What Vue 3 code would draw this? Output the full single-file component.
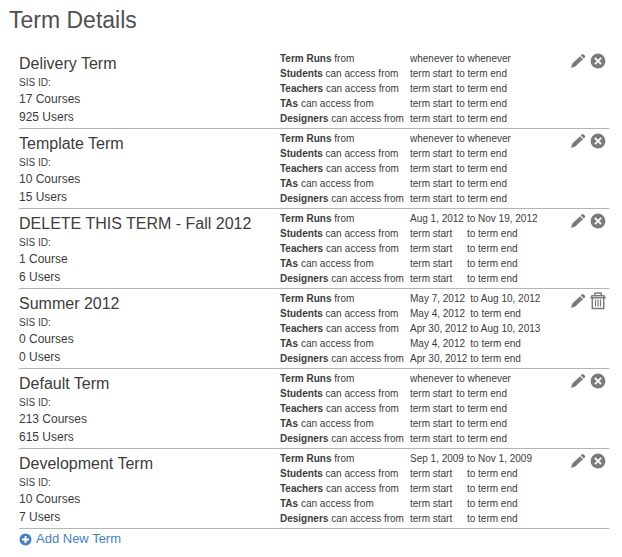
<script setup>
const openDates = [
  ['term start', 'term end'],
  ['term start', 'term end'],
  ['term start', 'term end'],
  ['term start', 'term end'],
]
const labels = [
  ['Term Runs', 'from'],
  ['Students', 'can access from'],
  ['Teachers', 'can access from'],
  ['TAs', 'can access from'],
  ['Designers', 'can access from'],
]
const terms = [
  { name: 'Delivery Term', courses: '17 Courses', users: '925 Users', dates: [['whenever', 'whenever'], ...openDates] },
  { name: 'Template Term', courses: '10 Courses', users: '15 Users', dates: [['whenever', 'whenever'], ...openDates] },
  { name: 'DELETE THIS TERM - Fall 2012', courses: '1 Course', users: '6 Users', dates: [['Aug 1, 2012', 'Nov 19, 2012'], ...openDates] },
  {
    name: 'Summer 2012',
    courses: '0 Courses',
    users: '0 Users',
    deletable: true,
    dates: [
      ['May 7, 2012', 'Aug 10, 2012'],
      ['May 4, 2012', 'term end'],
      ['Apr 30, 2012', 'Aug 10, 2013'],
      ['May 4, 2012', 'term end'],
      ['Apr 30, 2012', 'term end'],
    ],
  },
  { name: 'Default Term', courses: '213 Courses', users: '615 Users', dates: [['whenever', 'whenever'], ...openDates] },
  { name: 'Development Term', courses: '10 Courses', users: '7 Users', dates: [['Sep 1, 2009', 'Nov 1, 2009'], ...openDates] },
]
</script>

<template>
  <main class="page">
    <h1>Term Details</h1>
    <ul class="terms">
      <li v-for="term in terms" :key="term.name" class="term">
        <div class="summary">
          <h2>{{ term.name }}</h2>
          <p class="sis">SIS ID:</p>
          <p>{{ term.courses }}</p>
          <p>{{ term.users }}</p>
        </div>
        <table class="dates">
          <tbody>
            <tr v-for="(range, i) in term.dates" :key="i">
              <th scope="row"><b>{{ labels[i][0] }}</b> {{ labels[i][1] }}</th>
              <td>{{ range[0] }}</td>
              <td>to {{ range[1] }}</td>
            </tr>
          </tbody>
        </table>
        <div class="actions">
          <button type="button" :aria-label="'Edit ' + term.name">
            <svg width="16" height="16" viewBox="0 0 16 16">
              <path d="M1 15 2.3 10.6 10 3.2 13 6.2 5.3 13.6Z M10.7 2.5 12 1.2Q12.7.6 13.4 1.2L15 2.8Q15.6 3.5 15 4.2L13.7 5.5Z" />
            </svg>
          </button>
          <button type="button" :aria-label="'Delete ' + term.name" :disabled="!term.deletable">
            <svg v-if="term.deletable" width="16" height="18" viewBox="0 0 16 18">
              <path class="line" d="M4.8 3.5V1.5Q4.8 1 5.3 1H10.7Q11.2 1 11.2 1.5V3.5 M2.3 6V16.4H13.7V6" />
              <path class="slats" d="M5.5 7.5V14.5 M8 7.5V14.5 M10.5 7.5V14.5" />
              <path d="M1.5 3H14.5L16 6.4H0Z" />
              <path class="slot" d="M2.5 4.5H13.5" />
            </svg>
            <svg v-else width="16" height="16" viewBox="0 0 16 16">
              <circle cx="8" cy="8" r="7.4" />
              <path class="cross" d="M4.9 4.9 11.1 11.1M11.1 4.9 4.9 11.1" />
            </svg>
          </button>
        </div>
      </li>
    </ul>
    <a class="add" href="#add-term">
      <svg width="13" height="13" viewBox="0 0 13 13">
        <circle cx="6.5" cy="6.5" r="6" />
        <path class="plus" d="M6.5 3V10M3 6.5H10" />
      </svg>
      Add New Term
    </a>
  </main>
</template>

<style>
body {
  margin: 0;
  background: #fff;
}
</style>

<style scoped>
.page {
  padding: 6px 13px 8px 19px;
  font-family: "Liberation Sans", Arial, Helvetica, sans-serif;
  font-size: 12px;
  line-height: 18px;
  color: #3c3c3c;
}
h1 {
  margin: 0 0 15px -10px;
  font-size: 23px;
  line-height: 28px;
  font-weight: 400;
  color: #505050;
}
.terms {
  margin: 0;
  padding: 0;
  list-style: none;
}
.term {
  display: grid;
  grid-template-columns: 261px 1fr auto;
  align-items: start;
  border-bottom: 1px solid #b4b4b4;
}
.summary {
  padding: 4px 0 2px;
}
h2 {
  margin: 0;
  font-size: 16px;
  line-height: 22px;
  font-weight: 400;
}
p {
  margin: 0;
}
.sis {
  font-size: 10px;
  line-height: 15px;
}
.dates {
  justify-self: start;
  margin-top: 2px;
  border-collapse: collapse;
  font-size: 10px;
  line-height: 15px;
  white-space: nowrap;
}
.dates th {
  width: 130px;
  padding: 0;
  font-weight: 400;
  text-align: left;
}
.dates td {
  padding: 0 3px 0 0;
}
.actions {
  display: flex;
  align-items: center;
  gap: 4px;
  height: 18px;
  padding: 3px 3px 0 0;
}
button {
  display: block;
  padding: 0;
  border: 0;
  background: none;
  cursor: pointer;
}
svg {
  display: block;
  fill: #7b7b7b;
}
.line {
  fill: none;
  stroke: #7b7b7b;
  stroke-width: 1.5;
}
.slats {
  stroke: #7b7b7b;
  stroke-width: 1.2;
}
.slot {
  stroke: #c8c8c8;
  stroke-width: 1;
}
.cross {
  fill: none;
  stroke: #fff;
  stroke-width: 1.9;
}
.add {
  display: inline-flex;
  align-items: center;
  gap: 4px;
  font-size: 13px;
  line-height: 20px;
  color: #457fc0;
  text-decoration: none;
}
.add svg {
  fill: #457fc0;
}
.plus {
  stroke: #fff;
  stroke-width: 2;
}
</style>
